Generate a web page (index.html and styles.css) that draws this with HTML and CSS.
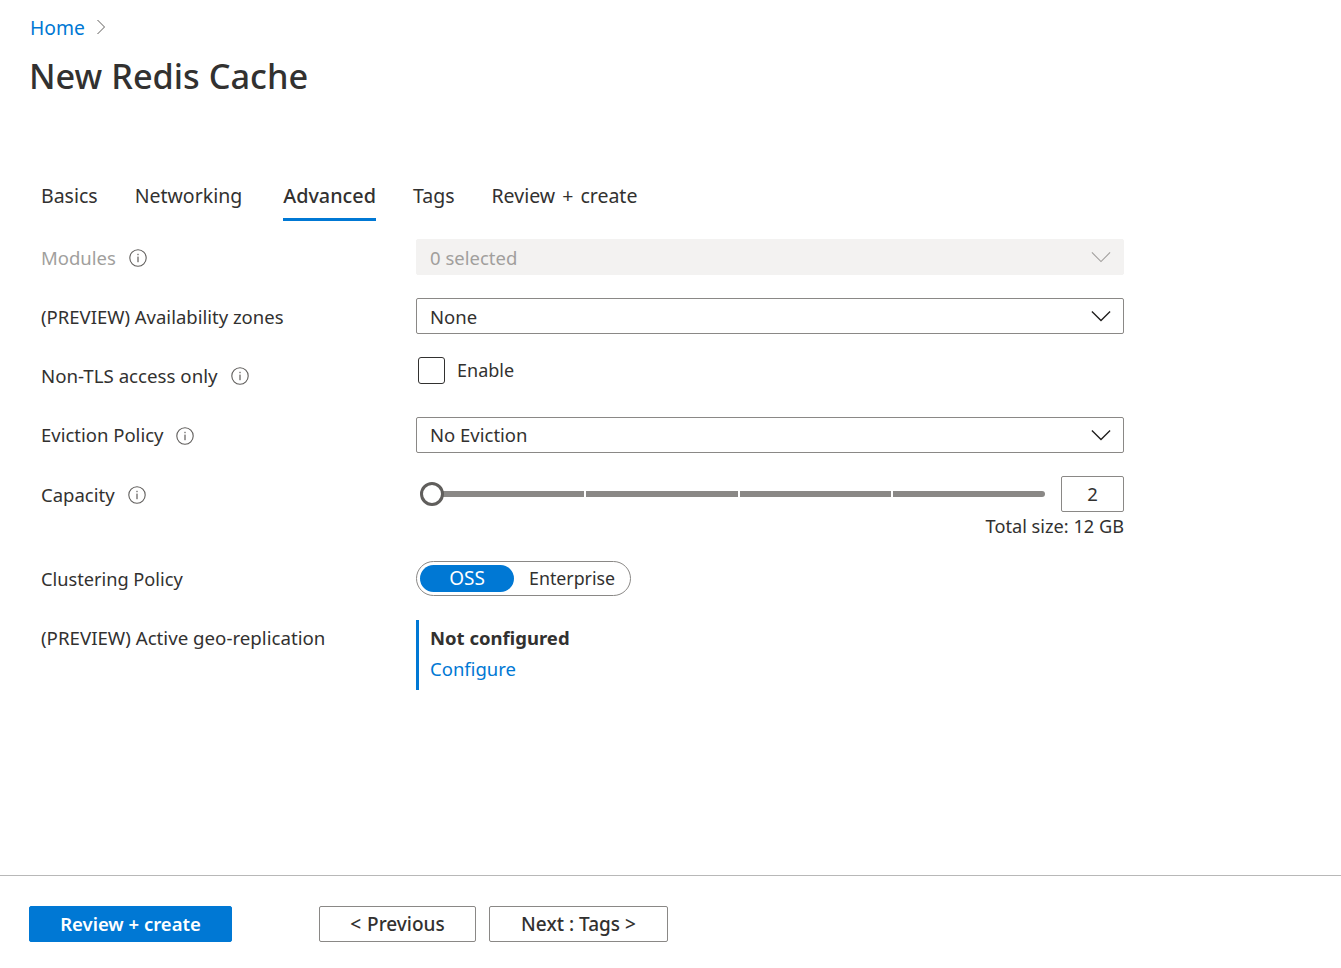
FILE: index.html
```html
<!DOCTYPE html>
<html lang="en">
  <head>
    <meta charset="UTF-8" />
    <meta name="viewport" content="width=device-width, initial-scale=1.0" />
    <title>New Redis Cache</title>
    <link rel="stylesheet" href="styles.css">
  </head>
  <body>
    <div class="page">
      <div class="content">
        <div class="breadcrumb">
          <a href="#" class="link">Home</a>
          <svg class="crumb-icon" width="10" height="16" viewBox="0 0 10 16"><path d="M1.5 1 L8.5 8 L1.5 15" fill="none" stroke="#605e5c" stroke-width="1"/></svg>
        </div>
        <h1 class="title">New Redis Cache</h1>

        <div class="tabs">
          <div class="tab">Basics</div>
          <div class="tab">Networking</div>
          <div class="tab tab-active">Advanced</div>
          <div class="tab">Tags</div>
          <div class="tab">Review + create</div>
        </div>

        <div class="form">
          <div class="row row-modules">
            <div class="label label-disabled">Modules
              <svg class="info" width="18" height="18" viewBox="0 0 18 18"><circle cx="9" cy="9" r="8.2" fill="none" stroke="#605e5c" stroke-width="1.1"/><rect x="8.4" y="7.6" width="1.2" height="5.6" fill="#605e5c"/><rect x="8.4" y="4.8" width="1.2" height="1.4" fill="#605e5c"/></svg>
            </div>
            <div class="select select-disabled">
              <span>0 selected</span>
              <svg class="chevron" width="22" height="12" viewBox="0 0 22 12"><path d="M1 1 L11 11 L21 1" fill="none" stroke="#a19f9d" stroke-width="1.2"/></svg>
            </div>
          </div>

          <div class="row row-zones">
            <div class="label">(PREVIEW) Availability zones</div>
            <div class="select">
              <span>None</span>
              <svg class="chevron" width="22" height="12" viewBox="0 0 22 12"><path d="M1 1 L11 11 L21 1" fill="none" stroke="#201f1e" stroke-width="1.5"/></svg>
            </div>
          </div>

          <div class="row row-tls">
            <div class="label">Non-TLS access only
              <svg class="info" width="18" height="18" viewBox="0 0 18 18"><circle cx="9" cy="9" r="8.2" fill="none" stroke="#605e5c" stroke-width="1.1"/><rect x="8.4" y="7.6" width="1.2" height="5.6" fill="#605e5c"/><rect x="8.4" y="4.8" width="1.2" height="1.4" fill="#605e5c"/></svg>
            </div>
            <div class="check-wrap">
              <div class="checkbox"></div>
              <span>Enable</span>
            </div>
          </div>

          <div class="row row-eviction">
            <div class="label">Eviction Policy
              <svg class="info" width="18" height="18" viewBox="0 0 18 18"><circle cx="9" cy="9" r="8.2" fill="none" stroke="#605e5c" stroke-width="1.1"/><rect x="8.4" y="7.6" width="1.2" height="5.6" fill="#605e5c"/><rect x="8.4" y="4.8" width="1.2" height="1.4" fill="#605e5c"/></svg>
            </div>
            <div class="select">
              <span>No Eviction</span>
              <svg class="chevron" width="22" height="12" viewBox="0 0 22 12"><path d="M1 1 L11 11 L21 1" fill="none" stroke="#201f1e" stroke-width="1.5"/></svg>
            </div>
          </div>

          <div class="row row-capacity">
            <div class="label">Capacity
              <svg class="info" width="18" height="18" viewBox="0 0 18 18"><circle cx="9" cy="9" r="8.2" fill="none" stroke="#605e5c" stroke-width="1.1"/><rect x="8.4" y="7.6" width="1.2" height="5.6" fill="#605e5c"/><rect x="8.4" y="4.8" width="1.2" height="1.4" fill="#605e5c"/></svg>
            </div>
            <div class="capacity">
              <div class="slider-line">
                <div class="slider">
                  <div class="segment"></div>
                  <div class="segment"></div>
                  <div class="segment"></div>
                  <div class="segment"></div>
                  <div class="thumb"></div>
                </div>
                <div class="number">2</div>
              </div>
              <div class="total">Total size: 12 GB</div>
            </div>
          </div>

          <div class="row row-cluster">
            <div class="label">Clustering Policy</div>
            <div class="toggle">
              <div class="toggle-on">OSS</div>
              <div class="toggle-off">Enterprise</div>
            </div>
          </div>

          <div class="row row-geo">
            <div class="label">(PREVIEW) Active geo-replication</div>
            <div class="geo">
              <div class="geo-title">Not configured</div>
              <a href="#" class="link">Configure</a>
            </div>
          </div>
        </div>
      </div>

      <div class="footer">
        <button class="btn btn-primary">Review + create</button>
        <button class="btn btn-prev">&lt; Previous</button>
        <button class="btn btn-next">Next : Tags &gt;</button>
      </div>
    </div>
  </body>
</html>
```

FILE: styles.css
```css
body {
  margin: 0;
  font-family: "Noto Sans", Arial, sans-serif;
  font-size: 18.5px;
  color: #323130;
  background-color: #fff;
}

.page {
  height: 968px;
  display: flex;
  flex-direction: column;
  overflow: hidden;
}

.content {
  flex: 1;
  padding: 13px 0 0 30px;
}

.link {
  color: #0078d4;
  text-decoration: none;
}

.breadcrumb {
  height: 28px;
  display: flex;
  align-items: center;
  font-size: 19.3px;
}

.crumb-icon {
  margin-left: 11px;
}

.title {
  margin: 10px 0 0 -1px;
  font-size: 34.3px;
  font-weight: 500;
  line-height: 50px;
}

.tabs {
  display: flex;
  margin: 76px 0 0 11px;
  font-size: 19.5px;
}

.tab {
  height: 44px;
  line-height: 38px;
  margin-right: 37px;
  box-sizing: border-box;
  word-spacing: 2px;
}

.tab-active {
  font-size: 19.8px;
  font-weight: 500;
  margin-left: 4px;
  border-bottom: 3px solid #0078d4;
}

.form {
  margin-left: 11px;
  padding-top: 18px;
}

.row {
  display: grid;
  grid-template-columns: 375px 708px;
}

.row-modules {
  height: 59px;
}

.row-zones {
  height: 59px;
}

.row-tls {
  height: 60px;
}

.row-eviction {
  height: 59px;
}

.row-capacity {
  height: 85px;
}

.row-cluster {
  height: 59px;
}

.label {
  height: 37px;
  display: flex;
  align-items: center;
}

.row-eviction .label {
  height: 35px;
}

.row-eviction .info {
  margin-top: 2px;
}

.row-tls .label {
  font-size: 18.7px;
}

.row-cluster .label {
  height: 36px;
  font-size: 18.2px;
}

.row-geo .label {
  height: 35px;
  font-size: 18.7px;
}

.label-disabled {
  color: #a19f9d;
}

.info {
  margin-left: 13px;
}

.select {
  height: 36px;
  box-sizing: border-box;
  border: 1px solid #8a8886;
  border-radius: 2px;
  padding: 0 12px 0 13px;
  display: flex;
  align-items: center;
  justify-content: space-between;
}

.row-eviction .select span {
  margin-bottom: 2px;
}

.select-disabled {
  background-color: #f3f2f1;
  border-color: #f3f2f1;
  color: #a19f9d;
}

.chevron {
  width: 20px;
}

.check-wrap {
  display: flex;
  align-items: center;
  height: 28px;
  padding-left: 2px;
  margin-top: -1px;
  font-size: 18px;
}

.checkbox {
  width: 27px;
  height: 27px;
  box-sizing: border-box;
  border: 1px solid #323130;
  border-radius: 3px;
  margin-right: 12px;
}

.capacity {
  display: flex;
  flex-direction: column;
  align-items: flex-end;
}

.slider-line {
  width: 100%;
  display: flex;
  align-items: center;
  height: 36px;
}

.slider {
  position: relative;
  margin-left: 16px;
  width: 613px;
  height: 6px;
  display: flex;
  gap: 2px;
}

.segment {
  flex: 1;
  background-color: #8a8886;
}

.segment:first-child {
  border-radius: 3px 0 0 3px;
}

.segment:nth-child(4) {
  border-radius: 0 3px 3px 0;
}

.thumb {
  position: absolute;
  left: -12px;
  top: -9px;
  width: 24px;
  height: 24px;
  box-sizing: border-box;
  border: 3px solid #605e5c;
  border-radius: 50%;
  background-color: #fff;
}

.number {
  margin-left: 16px;
  width: 63px;
  height: 36px;
  box-sizing: border-box;
  border: 1px solid #8a8886;
  border-radius: 2px;
  text-align: center;
  line-height: 33px;
}

.total {
  line-height: 28px;
  font-size: 18.2px;
}

.toggle {
  width: 215px;
  height: 35px;
  box-sizing: border-box;
  border: 1px solid #8a8886;
  border-radius: 18px;
  display: flex;
  align-items: center;
  padding-left: 3px;
}

.toggle-on {
  width: 94px;
  height: 27px;
  border-radius: 14px;
  background-color: #0078d4;
  color: #fff;
  text-align: center;
  line-height: 26px;
  font-size: 19px;
}

.toggle-off {
  margin: 0 0 2px 15px;
  font-size: 17.8px;
}

.geo {
  height: 70px;
  border-left: 3px solid #0078d4;
  padding-left: 11px;
  box-sizing: border-box;
  line-height: 31px;
  padding-top: 2px;
}

.geo-title {
  font-weight: 700;
}

.footer {
  height: 93px;
  box-sizing: border-box;
  border-top: 1px solid #b8b8b8;
  display: flex;
  align-items: flex-start;
  padding: 30px 0 0 29px;
}

.btn {
  height: 36px;
  box-sizing: border-box;
  font-family: inherit;
  font-size: 19px;
  font-weight: 500;
  border-radius: 2px;
  background-color: #fff;
  color: #323130;
  border: 1px solid #8a8886;
  padding: 0;
}

.btn-primary {
  width: 203px;
  padding-bottom: 2px;
  font-size: 18.5px;
  font-weight: 600;
  background-color: #0078d4;
  border-color: #0078d4;
  color: #fff;
}

.btn-prev {
  width: 157px;
  margin-left: 87px;
  word-spacing: 1px;
}

.btn-next {
  width: 179px;
  margin-left: 13px;
}
```
